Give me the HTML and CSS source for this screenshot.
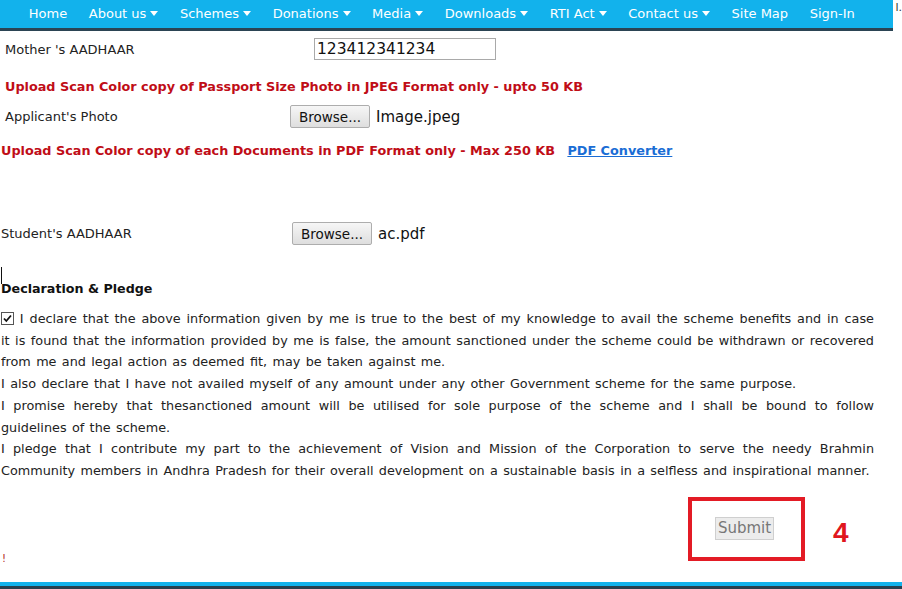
FILE: index.html
```html
<!DOCTYPE html>
<html lang="en">
<head>
    <meta charset="UTF-8">
    <meta name="viewport" content="width=device-width, initial-scale=1.0">
    <title>Application Form - Uploads &amp; Declaration</title>
    <link rel="stylesheet" href="styles.css">
</head>
<body>
    <div class="topbar">
        <ul class="menu">
            <li>Home</li>
            <li class="drop">About us</li>
            <li class="drop">Schemes</li>
            <li class="drop">Donations</li>
            <li class="drop">Media</li>
            <li class="drop">Downloads</li>
            <li class="drop">RTI Act</li>
            <li class="drop">Contact us</li>
            <li>Site Map</li>
            <li>Sign-In</li>
        </ul>
        <span class="stray">l.</span>
    </div>

    <div class="form">
        <div class="row row-input">
            <label>Mother 's AADHAAR</label>
            <input type="text" class="text-box" value="123412341234">
        </div>

        <p class="notice notice-photo">Upload Scan Color copy of Passport Size Photo in JPEG Format only - upto 50 KB</p>

        <div class="row row-photo">
            <label>Applicant's Photo</label>
            <div class="file">
                <button type="button" class="browse">Browse...</button>
                <span class="file-name">Image.jpeg</span>
            </div>
        </div>

        <p class="notice notice-docs">Upload Scan Color copy of each Documents in PDF Format only - Max 250 KB <a href="#" class="converter">PDF Converter</a></p>

        <div class="row row-doc">
            <label>Student's AADHAAR</label>
            <div class="file">
                <button type="button" class="browse">Browse...</button>
                <span class="file-name">ac.pdf</span>
            </div>
        </div>

        <div class="caret"></div>
        <h4 class="pledge-title">Declaration &amp; Pledge</h4>

        <p class="pledge">
            <span class="tick"><svg width="11" height="11" viewBox="0 0 11 11"><path d="M2 5.5 L4.3 8 L9 2.5" fill="none" stroke="#111" stroke-width="1.8"/></svg></span>
            I declare that the above information given by me is true to the best of my knowledge to avail the scheme benefits and in case it is found that the information provided by me is false, the amount sanctioned under the scheme could be withdrawn or recovered from me and legal action as deemed fit, may be taken against me.<br>
            I also declare that I have not availed myself of any amount under any other Government scheme for the same purpose.<br>
            I promise hereby that thesanctioned amount will be utilised for sole purpose of the scheme and I shall be bound to follow guidelines of the scheme.<br>
            I pledge that I contribute my part to the achievement of Vision and Mission of the Corporation to serve the needy Brahmin Community members in Andhra Pradesh for their overall development on a sustainable basis in a selfless and inspirational manner.
        </p>

        <div class="submit-row">
            <span class="warn">!</span>
            <div class="highlight">
                <button type="button" class="submit" disabled>Submit</button>
            </div>
            <span class="step">4</span>
        </div>
    </div>

    <div class="footer"></div>
</body>
</html>
```

FILE: styles.css
```css
body {
    margin: 0;
    font-family: "DejaVu Sans", Verdana, sans-serif;
    font-size: 13px;
    color: #222;
    background-color: white;
}
.topbar {
    display: flex;
    align-items: flex-start;
}
.menu {
    display: flex;
    width: 877px;
    height: 28px;
    margin: 0;
    padding: 0 0 0 18px;
    list-style: none;
    background-color: #12b2ec;
    border-bottom: 3px solid #2b4454;
}
.menu li {
    padding: 0 10.8px;
    line-height: 28px;
    color: white;
    font-size: 13px;
    white-space: nowrap;
}
.menu li.drop::after {
    content: "";
    display: inline-block;
    margin-left: 4px;
    vertical-align: 2px;
    border-left: 4px solid transparent;
    border-right: 4px solid transparent;
    border-top: 5px solid white;
}
.stray {
    font-size: 11px;
    line-height: 16px;
    margin-left: 2px;
    color: #333;
}
.row {
    display: grid;
    align-items: center;
}
.row label {
    color: #222;
}
.row-input {
    margin-top: 7px;
    padding-left: 5px;
    grid-template-columns: 309px auto;
}
.text-box {
    width: 182px;
    height: 22px;
    box-sizing: border-box;
    padding: 0 2px;
    border: 1px solid #a9a9a9;
    font-family: "DejaVu Sans", Verdana, sans-serif;
    font-size: 15.5px;
    color: #111;
}
.notice {
    margin: 0;
    line-height: 16px;
    font-weight: bold;
    font-size: 12.8px;
    color: #c00d17;
}
.notice-photo {
    margin-top: 19px;
    padding-left: 5px;
}
.notice-docs {
    margin-top: 15px;
    padding-left: 1px;
}
.converter {
    margin-left: 8px;
    color: #1a6dd5;
}
.row-photo {
    margin-top: 10px;
    padding-left: 5px;
    grid-template-columns: 285px auto;
}
.row-doc {
    margin-top: 63px;
    padding-left: 1px;
    grid-template-columns: 291px auto;
}
.file {
    display: flex;
    align-items: center;
}
.browse {
    width: 80px;
    height: 23px;
    padding: 0;
    border: 1px solid #adadad;
    border-radius: 2px;
    background: linear-gradient(#f6f6f6, #dedede);
    font-family: "DejaVu Sans", Verdana, sans-serif;
    font-size: 13.5px;
    color: #111;
}
.file-name {
    margin-left: 6px;
    font-size: 15px;
    color: #111;
}
.caret {
    margin: 22px 0 0 1px;
    height: 17px;
    border-left: 1px solid #111;
    width: 0;
}
.pledge-title {
    margin: -3px 0 0 1px;
    line-height: 16px;
    font-size: 12.7px;
    color: #111;
}
.pledge {
    width: 873px;
    margin: 11px 0 0 1px;
    line-height: 21.7px;
    text-align: justify;
    font-size: 12.8px;
    word-spacing: 1.3px;
    color: #222;
}
.tick {
    display: inline-block;
    width: 11px;
    height: 11px;
    border: 1px solid #555;
    vertical-align: -1px;
    line-height: 0;
}
.submit-row {
    display: flex;
    margin-top: 15px;
}
.warn {
    width: 686px;
    padding-left: 2px;
    align-self: flex-end;
    margin-bottom: -4px;
    font-size: 10px;
    line-height: 12px;
    color: #b0281a;
}
.highlight {
    width: 117px;
    height: 64px;
    box-sizing: border-box;
    padding: 16px 0 0 23px;
    border: 4px solid #e31b25;
}
.submit {
    width: 59px;
    height: 23px;
    padding: 0;
    border: 1px solid #cfcfcf;
    background-color: #ececec;
    font-family: "DejaVu Sans", Verdana, sans-serif;
    font-size: 15px;
    color: #777;
}
.step {
    margin: 22px 0 0 28px;
    font-family: "Liberation Sans", Arial, sans-serif;
    font-weight: bold;
    font-size: 28px;
    line-height: 28px;
    color: #e0161e;
}
.footer {
    margin-top: 21px;
    height: 4px;
    background-color: #12b2ec;
    border-bottom: 10px solid #27404f;
}
```
